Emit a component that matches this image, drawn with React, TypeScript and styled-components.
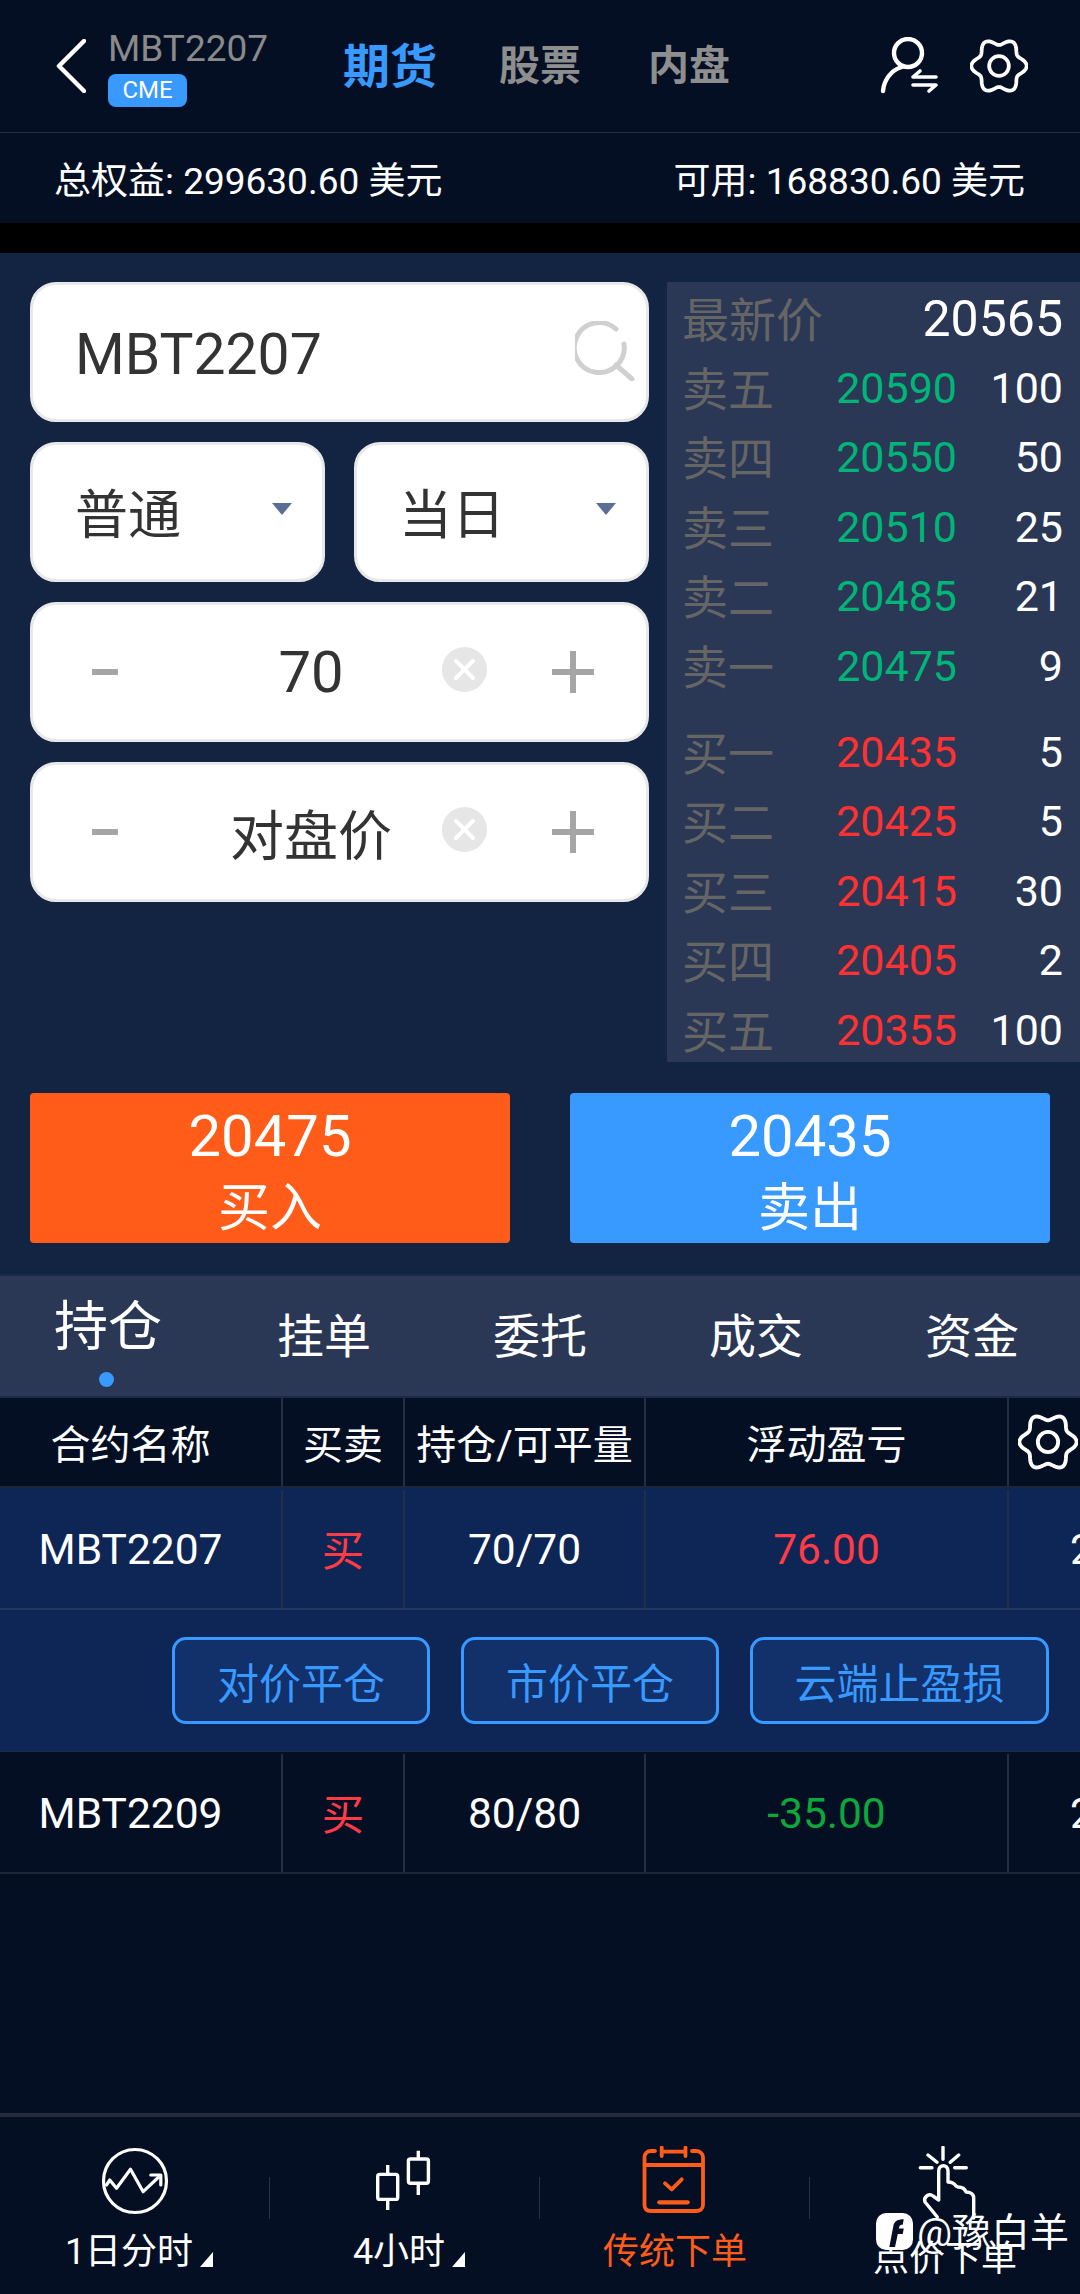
import React from "react";
import styled, { createGlobalStyle } from "styled-components";

const GlobalStyle = createGlobalStyle`
  html, body { margin: 0; padding: 0; background: #040f24; }
  * { box-sizing: border-box; }
  body { font-family: Roboto, "Noto Sans CJK SC", sans-serif; }
`;

const Page = styled.div`
  position: relative;
  display: flex;
  flex-direction: column;
  width: 1080px;
  height: 2294px;
  overflow: hidden;
  background: #040f24;
  color: #fff;
`;

// 顶部导航
const Header = styled.header`
  display: flex;
  align-items: center;
  height: 133px;
  padding-left: 56px;
  border-bottom: 1px solid #252e41;
`;

const Symbol = styled.div`
  display: flex;
  flex-direction: column;
  align-items: flex-start;
  margin-left: 22px;
  margin-top: 6px;
  width: 235px;
`;

const SymbolName = styled.div`
  font-size: 37px;
  line-height: 36px;
  color: #8a8a8a;
`;

const ExchangeBadge = styled.div`
  margin-top: 7px;
  width: 79px;
  height: 33px;
  border-radius: 8px;
  background: #3899ff;
  font-size: 24px;
  line-height: 33px;
  text-align: center;
`;

const MarketTab = styled.div<{ $active?: boolean }>`
  margin-right: ${(p) => (p.$active ? "62px" : "67px")};
  margin-bottom: 8px;
  font-size: ${(p) => (p.$active ? "47px" : "41px")};
  font-weight: 700;
  color: ${(p) => (p.$active ? "#3899ff" : "#8e8e8e")};
`;

const HeaderIcons = styled.div`
  display: flex;
  align-items: center;
  gap: 32px;
  margin-left: auto;
  margin-right: 52px;
`;

const AccountBar = styled.div`
  display: flex;
  justify-content: space-between;
  align-items: center;
  height: 90px;
  padding: 0 55px 0 54px;
  font-size: 37px;
`;

const BlackStrip = styled.div`
  height: 30px;
  background: #000;
`;

// 下单面板
const Panel = styled.section`
  height: 1021px;
  padding-top: 29px;
  background: #132342;
`;

const PanelTop = styled.div`
  display: flex;
  align-items: flex-start;
  padding-left: 30px;
`;

const FormCol = styled.div`
  display: flex;
  flex-direction: column;
  gap: 20px;
  width: 619px;
`;

const SelectRow = styled.div`
  display: flex;
  justify-content: space-between;
`;

const Card = styled.div<{ $half?: boolean }>`
  position: relative;
  display: flex;
  align-items: center;
  width: ${(p) => (p.$half ? "295px" : "100%")};
  height: 140px;
  padding-left: 42px;
  padding-right: 11px;
  padding-bottom: 2px;
  border: 3px solid #e8e8e8;
  border-radius: 26px;
  background: #fff;
  color: #333;
  font-size: 53px;
`;

const SearchText = styled.div`
  flex: 1;
  padding-top: 6px;
  font-size: 57px;
`;

const Caret = styled.div`
  margin-left: auto;
  margin-right: 19px;
  margin-top: -4px;
  border-left: 10px solid transparent;
  border-right: 10px solid transparent;
  border-top: 12px solid #5b6e96;
`;

const Stepper = styled.div`
  display: grid;
  grid-template-columns: 93px 252px 115px 1fr;
  align-items: center;
  width: 100%;
  margin-left: -42px;
  margin-right: -11px;
  margin-top: 2px;
  padding-left: 59px;
`;

const StepValue = styled.div<{ $num?: boolean }>`
  text-align: center;
  font-size: ${(p) => (p.$num ? "58px" : "54px")};
`;

const MinusMark = styled.div`
  width: 26px;
  height: 6px;
  background: #a6a6a6;
`;

const PlusMark = styled.svg`
  width: 42px;
  height: 42px;
`;

const ClearCircle = styled.svg`
  width: 45px;
  height: 45px;
  margin-left: 5px;
  margin-top: -6px;
`;

// 五档盘口
const Book = styled.div`
  flex: 1;
  height: 780px;
  margin-left: 18px;
  padding: 2px 17px 0 15px;
  background: #2a3856;
`;

const BookRow = styled.div<{ $gap?: boolean }>`
  display: flex;
  align-items: center;
  height: 69.4px;
  margin-top: ${(p) => (p.$gap ? "17px" : "0")};
`;

const BookLabel = styled.div<{ $wide?: boolean }>`
  width: ${(p) => (p.$wide ? "141px" : "92px")};
  padding-bottom: 4px;
  font-size: ${(p) => (p.$wide ? "47px" : "46px")};
  color: #656565;
  white-space: nowrap;
`;

const BookPrice = styled.div<{ $color: string }>`
  width: 183px;
  text-align: right;
  font-size: 43px;
  color: ${(p) => p.$color};
`;

const BookQty = styled.div`
  flex: 1;
  text-align: right;
  font-size: 43px;
`;

const LastPrice = styled.div`
  flex: 1;
  text-align: right;
  font-size: 50px;
`;

const TradeRow = styled.div`
  display: flex;
  justify-content: space-between;
  margin-top: 31px;
  padding: 0 30px;
`;

const TradeButton = styled.div<{ $color: string }>`
  display: flex;
  flex-direction: column;
  align-items: center;
  width: 480px;
  height: 150px;
  border-radius: 4px;
  background: ${(p) => p.$color};
`;

const TradePrice = styled.div`
  margin-top: 10px;
  font-size: 58px;
  line-height: 66px;
`;

const TradeLabel = styled.div`
  font-size: 52px;
  line-height: 80px;
`;

// 持仓标签
const TabBar = styled.nav`
  display: grid;
  grid-template-columns: repeat(5, 216px);
  height: 122px;
  border-top: 2px solid #1d2b48;
  background: #2a3856;
`;

const TabItem = styled.div<{ $active?: boolean }>`
  position: relative;
  text-align: center;
  padding-top: ${(p) => (p.$active ? "17px" : "26px")};
  font-size: ${(p) => (p.$active ? "54px" : "47px")};
  line-height: 70px;
`;

const TabDot = styled.span`
  position: absolute;
  left: 99px;
  top: 96px;
  width: 15px;
  height: 15px;
  border-radius: 50%;
  background: #3899ff;
`;

// 持仓表格
const TableRow = styled.div<{ $kind: "head" | "active" | "plain" }>`
  display: grid;
  grid-template-columns: 283px 122px 241px 363px 71px;
  height: ${(p) => (p.$kind === "head" ? "92px" : "122px")};
  border-top: 2px solid ${(p) => (p.$kind === "head" ? "#1d2b48" : "transparent")};
  border-bottom: 2px solid ${(p) => (p.$kind === "plain" ? "#1c2639" : p.$kind === "active" ? "#24385f" : "#1d2638")};
  background: ${(p) => (p.$kind === "active" ? "#0e2655" : "#040f24")};
`;

const TableCell = styled.div<{ $color?: string; $head?: boolean; $first?: boolean; $last?: boolean; $side?: boolean }>`
  display: flex;
  align-items: center;
  justify-content: ${(p) => (p.$last ? "flex-start" : "center")};
  padding-right: ${(p) => (p.$first ? "20px" : "0")};
  padding-left: ${(p) => (p.$last ? (p.$head ? "9px" : "61px") : "0")};
  padding-bottom: ${(p) => (p.$side ? "4px" : "0")};
  border-right: ${(p) => (p.$last ? "none" : "2px solid #222f48")};
  font-size: ${(p) => (p.$head ? "40px" : "42.5px")};
  color: ${(p) => p.$color || "#fff"};
  white-space: nowrap;
  overflow: visible;
`;

const ActionRow = styled.div`
  display: flex;
  justify-content: flex-end;
  align-items: center;
  gap: 31px;
  height: 142px;
  padding-right: 31px;
  background: #0e2655;
  border-bottom: 1px solid #1c2b4a;
`;

const ActionButton = styled.div<{ $wide?: boolean }>`
  display: flex;
  align-items: center;
  justify-content: center;
  width: ${(p) => (p.$wide ? "299px" : "258px")};
  height: 87px;
  border: 3px solid #3899ff;
  border-radius: 14px;
  background: #12306a;
  color: #3899ff;
  font-size: 42px;
`;

const Spacer = styled.div`
  flex: 1;
`;

// 底部工具栏
const BottomBar = styled.footer`
  display: grid;
  grid-template-columns: repeat(4, 270px);
  height: 181px;
  border-top: 4px solid #242d3e;
`;

const BottomItem = styled.div<{ $color?: string; $divider?: boolean }>`
  position: relative;
  display: flex;
  flex-direction: column;
  align-items: center;
  padding-top: 29px;
  color: ${(p) => p.$color || "#fff"};
  font-size: 36px;

  &::after {
    content: "";
    display: ${(p) => (p.$divider ? "block" : "none")};
    position: absolute;
    right: 0;
    top: 60px;
    height: 42px;
    width: 1px;
    background: #293244;
  }
`;

const BottomIcon = styled.svg<{ $tall?: boolean }>`
  width: 70px;
  height: ${(p) => (p.$tall ? "80px" : "70px")};
  margin-left: ${(p) => (p.$tall ? "3px" : "0")};
`;

const BottomLabel = styled.div<{ $low?: boolean; $mark?: boolean }>`
  display: flex;
  align-items: flex-end;
  margin-top: ${(p) => (p.$low ? "8px" : "11px")};
  margin-left: ${(p) => (p.$mark ? "8px" : "0")};
  line-height: 50px;
`;

const CornerMark = styled.span`
  width: 0;
  height: 0;
  margin-left: 7px;
  margin-bottom: 10px;
  border-left: 13px solid transparent;
  border-bottom: 15px solid #fff;
`;

const Watermark = styled.div`
  position: absolute;
  left: 876px;
  top: 2201px;
  display: flex;
  align-items: center;
  font-size: 39px;
  color: #fff;
  white-space: nowrap;
`;

const WatermarkLogo = styled.svg`
  width: 37px;
  height: 37px;
  margin-right: 4px;
  margin-top: 5px;
`;

const gearPath = (() => {
  const pts: string[] = [];
  for (let i = 0; i <= 120; i++) {
    const t = (i / 120) * Math.PI * 2;
    const r = 23.5 - 3.2 * Math.cos(6 * t);
    const x = 28 + r * Math.sin(t);
    const y = 28 - r * Math.cos(t);
    pts.push(`${i === 0 ? "M" : "L"}${x.toFixed(2)} ${y.toFixed(2)}`);
  }
  return pts.join(" ") + "Z";
})();

const GearIcon = ({ size = 58 }: { size?: number }) => (
  <svg width={size} height={size} viewBox="0 0 56 56" fill="none" stroke="#fff" strokeWidth="3.6">
    <path d={gearPath} />
    <circle cx="28" cy="28" r="9.5" />
  </svg>
);

const UserSwitchIcon = () => (
  <svg width="58" height="58" viewBox="0 0 58 58" fill="none" stroke="#fff" strokeWidth="4.4" strokeLinecap="round" strokeLinejoin="round">
    <circle cx="28" cy="16" r="14" />
    <path d="M22 30C11 33 4 43 3 54" />
    <path d="M56 40H33L40 34" strokeWidth="3.6" />
    <path d="M33 48H56L49 54" strokeWidth="3.6" />
  </svg>
);

const sellRows = [
  ["卖五", "20590", "100"],
  ["卖四", "20550", "50"],
  ["卖三", "20510", "25"],
  ["卖二", "20485", "21"],
  ["卖一", "20475", "9"],
];

const buyRows = [
  ["买一", "20435", "5"],
  ["买二", "20425", "5"],
  ["买三", "20415", "30"],
  ["买四", "20405", "2"],
  ["买五", "20355", "100"],
];

const tabs = ["持仓", "挂单", "委托", "成交", "资金"];

const StepField = ({ value, num }: { value: string; num?: boolean }) => (
  <Card>
    <Stepper>
      <MinusMark />
      <StepValue $num={num}>{value}</StepValue>
      <ClearCircle viewBox="0 0 45 45">
        <circle cx="22.5" cy="22.5" r="22.5" fill="#e6e6e6" />
        <path d="M14 14L31 31M31 14L14 31" stroke="#fff" strokeWidth="4" strokeLinecap="round" />
      </ClearCircle>
      <PlusMark viewBox="0 0 42 42">
        <path d="M0 21H42M21 0V42" stroke="#a6a6a6" strokeWidth="6" />
      </PlusMark>
    </Stepper>
  </Card>
);

export default function App() {
  return (
    <Page>
      <GlobalStyle />
      <Header>
        <svg width="30" height="54" viewBox="0 0 30 54" fill="none" stroke="#fff" strokeWidth="4.5" strokeLinecap="round" strokeLinejoin="round">
          <path d="M28 2L3 27L28 52" />
        </svg>
        <Symbol>
          <SymbolName>MBT2207</SymbolName>
          <ExchangeBadge>CME</ExchangeBadge>
        </Symbol>
        <MarketTab $active>期货</MarketTab>
        <MarketTab>股票</MarketTab>
        <MarketTab>内盘</MarketTab>
        <HeaderIcons>
          <UserSwitchIcon />
          <GearIcon />
        </HeaderIcons>
      </Header>
      <AccountBar>
        <div>总权益: 299630.60 美元</div>
        <div>可用: 168830.60 美元</div>
      </AccountBar>
      <BlackStrip />

      <Panel>
        <PanelTop>
          <FormCol>
            <Card>
              <SearchText>MBT2207</SearchText>
              <svg width="60" height="60" viewBox="0 0 60 60" fill="none" stroke="#d0d0d0" strokeWidth="5" strokeLinecap="round">
                <path d="M49 23A25 25 0 1 1 41 8" />
                <path d="M41 44L57 58" />
              </svg>
            </Card>
            <SelectRow>
              <Card $half>
                普通
                <Caret />
              </Card>
              <Card $half>
                当日
                <Caret />
              </Card>
            </SelectRow>
            <StepField value="70" num />
            <StepField value="对盘价" />
          </FormCol>

          <Book>
            <BookRow>
              <BookLabel $wide>最新价</BookLabel>
              <LastPrice>20565</LastPrice>
            </BookRow>
            {sellRows.map(([label, price, qty]) => (
              <BookRow key={label}>
                <BookLabel>{label}</BookLabel>
                <BookPrice $color="#00b578">{price}</BookPrice>
                <BookQty>{qty}</BookQty>
              </BookRow>
            ))}
            {buyRows.map(([label, price, qty], i) => (
              <BookRow key={label} $gap={i === 0}>
                <BookLabel>{label}</BookLabel>
                <BookPrice $color="#ff3131">{price}</BookPrice>
                <BookQty>{qty}</BookQty>
              </BookRow>
            ))}
          </Book>
        </PanelTop>

        <TradeRow>
          <TradeButton $color="#ff5c1a">
            <TradePrice>20475</TradePrice>
            <TradeLabel>买入</TradeLabel>
          </TradeButton>
          <TradeButton $color="#3899ff">
            <TradePrice>20435</TradePrice>
            <TradeLabel>卖出</TradeLabel>
          </TradeButton>
        </TradeRow>
      </Panel>

      <TabBar>
        {tabs.map((t, i) => (
          <TabItem key={t} $active={i === 0}>
            {t}
            {i === 0 && <TabDot />}
          </TabItem>
        ))}
      </TabBar>

      <TableRow $kind="head">
        <TableCell $head $first>合约名称</TableCell>
        <TableCell $head>买卖</TableCell>
        <TableCell $head>持仓/可平量</TableCell>
        <TableCell $head>浮动盈亏</TableCell>
        <TableCell $head $last>
          <GearIcon size={60} />
        </TableCell>
      </TableRow>
      <TableRow $kind="active">
        <TableCell $first>MBT2207</TableCell>
        <TableCell $color="#ff3b46" $side>买</TableCell>
        <TableCell>70/70</TableCell>
        <TableCell $color="#ff3b46">76.00</TableCell>
        <TableCell $last>20475</TableCell>
      </TableRow>
      <ActionRow>
        <ActionButton>对价平仓</ActionButton>
        <ActionButton>市价平仓</ActionButton>
        <ActionButton $wide>云端止盈损</ActionButton>
      </ActionRow>
      <TableRow $kind="plain">
        <TableCell $first>MBT2209</TableCell>
        <TableCell $color="#ff3b46" $side>买</TableCell>
        <TableCell>80/80</TableCell>
        <TableCell $color="#0ba83c">-35.00</TableCell>
        <TableCell $last>20440</TableCell>
      </TableRow>
      <Spacer />

      <BottomBar>
        <BottomItem $divider>
          <BottomIcon viewBox="0 0 70 70" fill="none" stroke="#fff" strokeWidth="3.2" strokeLinejoin="round" strokeLinecap="round">
            <circle cx="35" cy="35" r="31.5" />
            <path d="M6.5 39L9.8 34L16.5 42.3L30.5 23.3L43.2 45.7L59.8 30" />
            <path d="M50.8 29H60.8V39" />
          </BottomIcon>
          <BottomLabel $mark>
            1日分时
            <CornerMark />
          </BottomLabel>
        </BottomItem>
        <BottomItem $divider>
          <BottomIcon viewBox="0 0 70 70" fill="none" stroke="#fff" strokeWidth="3.4">
            <rect x="7.7" y="28.4" width="20" height="25" rx="2" />
            <path d="M17.7 19V28.4M17.7 53.4V64" />
            <rect x="38.4" y="13" width="20" height="24.3" rx="2" />
            <path d="M48.3 4.7V13M48.3 37.3V49" />
          </BottomIcon>
          <BottomLabel $mark>
            4小时
            <CornerMark />
          </BottomLabel>
        </BottomItem>
        <BottomItem $divider $color="#ff5c1a">
          <BottomIcon viewBox="0 0 70 70" fill="none" stroke="#ff5c1a" strokeWidth="3.8" strokeLinecap="round" strokeLinejoin="round">
            <path d="M15 5H11C7 5 4.5 8 4.5 11V59C4.5 63 7 65 11 65H56C60 65 63 63 63 59V11C63 8 60 5 56 5H52" />
            <path d="M4.5 19H63" />
            <path d="M21.7 1.5V10M45.5 1.5V10M21.7 5.7H45.5" />
            <path d="M25 37.3L31.7 43.3L41.7 33.3" />
            <path d="M19.3 56.3H47.7" strokeWidth="4.2" />
          </BottomIcon>
          <BottomLabel>传统下单</BottomLabel>
        </BottomItem>
        <BottomItem>
          <BottomIcon $tall viewBox="0 0 70 80" fill="none" stroke="#fff" strokeWidth="3.4" strokeLinecap="round" strokeLinejoin="round">
            <path d="M31 1.3V13.3M16 9L25 16.3M46.7 9L38.3 16.3M8.3 21.7H20M42.7 21.7H54.3" />
            <path d="M25.3 71L13 56C11 51 17 47 21 50L26.7 54V25C26.7 18 36 18 36 25V36C38 36 42 37 44 40L46 41C50 41 53 43 54 46C58 46 61.7 48 61.7 52V72" />
          </BottomIcon>
          <BottomLabel $low>点价下单</BottomLabel>
        </BottomItem>
      </BottomBar>

      <Watermark>
        <WatermarkLogo viewBox="0 0 36 36">
          <rect width="36" height="36" rx="10" fill="#fff" />
          <path d="M13 33L17 12C18 8 21 6 27 6L26 11.5C24 11.5 22.8 12 22.5 14L22.2 15H27L26 20.5H21.2L18.5 33Z" fill="#040f24" />
        </WatermarkLogo>
        @豫白羊
      </Watermark>
    </Page>
  );
}
